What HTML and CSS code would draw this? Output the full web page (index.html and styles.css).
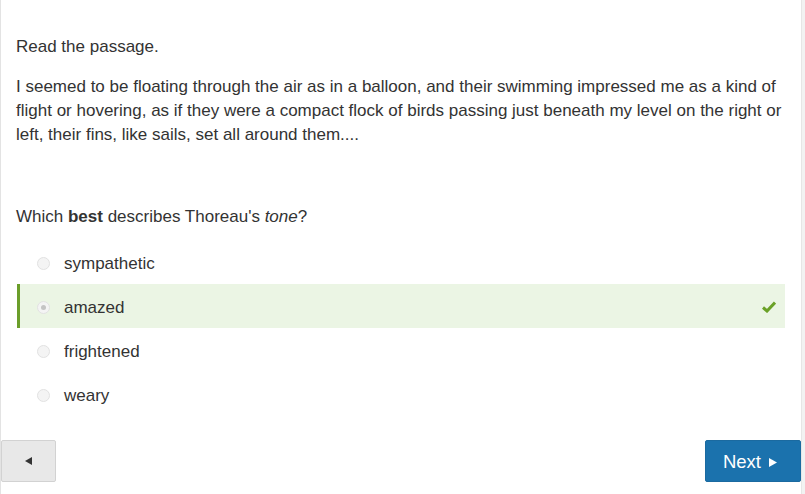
FILE: index.html
```html
<!DOCTYPE html>
<html>
<head>
<meta charset="utf-8">
<link rel="stylesheet" href="styles.css">
</head>
<body>
<div class="page">
  <div class="card">
    <p class="intro">Read the passage.</p>
    <p class="passage">I seemed to be floating through the air as in a balloon, and their swimming impressed me as a kind of flight or hovering, as if they were a compact flock of birds passing just beneath my level on the right or left, their fins, like sails, set all around them....</p>
    <p class="question">Which <b>best</b> describes Thoreau's <i>tone</i>?</p>
    <div class="options">
      <div class="option"><span class="radio"></span><span class="label">sympathetic</span></div>
      <div class="option selected"><span class="radio checked"></span><span class="label">amazed</span>
        <svg class="check" width="14" height="12" viewBox="0 0 14 12"><path d="M1 6.5 L5 10 L13 1.5" fill="none" stroke="#6aa127" stroke-width="3"/></svg>
      </div>
      <div class="option"><span class="radio"></span><span class="label">frightened</span></div>
      <div class="option"><span class="radio"></span><span class="label">weary</span></div>
    </div>
    <div class="nav">
      <button class="back"><svg width="8" height="8" viewBox="0 0 8 8"><path d="M7 0 L7 8 L0 4 Z" fill="#333"/></svg></button>
      <button class="next">Next <svg width="8" height="9" viewBox="0 0 8 9"><path d="M0 0 L0 9 L8 4.5 Z" fill="#fff"/></svg></button>
    </div>
  </div>
</div>
</body>
</html>
```
FILE: styles.css
```css
html, body {
  margin: 0;
  padding: 0;
  background: #f2f2f2;
}
.page {
  width: 805px;
  height: 494px;
  overflow: hidden;
}
.card {
  width: 800px;
  height: 494px;
  background: #fff;
  border-left: 1px solid #e3e3e3;
  border-right: 1px solid #e6e6e6;
  font-family: "Liberation Sans", Arial, sans-serif;
  font-size: 17px;
  line-height: 24px;
  color: #333;
  box-sizing: content-box;
}
p {
  margin: 0;
  padding: 0 14px 0 15px;
}
.intro {
  padding-top: 35px;
}
.passage {
  margin-top: 16px;
}
.question {
  margin-top: 58px;
}
.options {
  margin: 11px 16px 0 16px;
}
.option {
  height: 44px;
  display: flex;
  align-items: center;
  position: relative;
  border-left: 3px solid transparent;
}
.label {
  padding-top: 3px;
}
.option.selected {
  background: #ebf5e4;
  border-left-color: #6b9e2a;
}
.radio {
  width: 11px;
  height: 11px;
  border-radius: 50%;
  border: 1px solid #e2e2e2;
  background: #f4f4f4;
  margin-left: 17px;
  margin-right: 14px;
  margin-top: 2px;
  box-sizing: content-box;
  display: flex;
  align-items: center;
  justify-content: center;
}
.radio.checked::after {
  content: "";
  width: 5px;
  height: 5px;
  border-radius: 50%;
  background: #c4c4c4;
}
.check {
  position: absolute;
  right: 9px;
  top: 17px;
}
.nav {
  margin-top: 24px;
  display: flex;
  justify-content: space-between;
}
button {
  font-family: "Liberation Sans", Arial, sans-serif;
  height: 42px;
  cursor: pointer;
}
.back {
  width: 55px;
  background: #e8e8e8;
  border: 1px solid #d2d2d2;
  border-radius: 2px;
  display: flex;
  align-items: center;
  justify-content: center;
  padding: 0;
}
.next {
  width: 96px;
  background: #1b72ad;
  border: 1px solid #1b6aa0;
  border-radius: 2px;
  color: #fff;
  font-size: 18.5px;
  display: flex;
  align-items: center;
  justify-content: center;
  gap: 8px;
  padding: 2px 6px 0 0;
}
```
